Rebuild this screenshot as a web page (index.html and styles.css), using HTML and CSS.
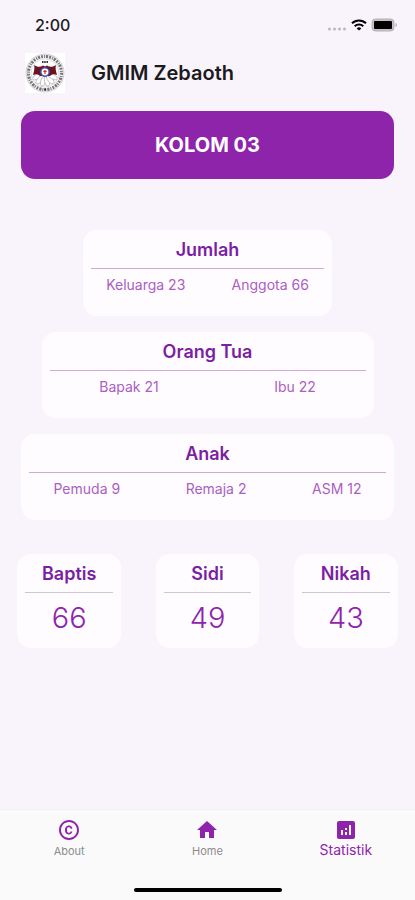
FILE: index.html
```html
<!DOCTYPE html>
<html lang="id">
<head>
  <meta charset="UTF-8">
  <meta name="viewport" content="width=device-width, initial-scale=1.0">
  <title>GMIM Zebaoth</title>
  <link rel="stylesheet" href="styles.css">
</head>
<body>
  <div class="status-bar">
    <span class="time">2:00</span>
    <div class="status-icons">
      <svg width="20" height="4" viewBox="0 0 20 4" fill="#bbb6bd">
        <circle cx="2.500" cy="2" r="1.500"/><circle cx="7.500" cy="2" r="1.500"/>
        <circle cx="12.500" cy="2" r="1.500"/><circle cx="17.500" cy="2" r="1.500"/>
      </svg>
      <svg width="16" height="12" viewBox="0 0 16 12" fill="none" stroke="#000" stroke-width="2">
        <path d="M1 4.300a10 10 0 0 1 14 0"/>
        <path d="M3.700 7.200a6.200 6.200 0 0 1 8.600 0"/>
        <path d="M8 11.600 5.700 9.400a3.300 3.300 0 0 1 4.600 0z" fill="#000" stroke="none"/>
      </svg>
      <svg width="27" height="14" viewBox="0 0 27 14">
        <rect x="1" y="1" width="22" height="12" rx="3.500" fill="#c6c1c8" stroke="#b5b0b8"/>
        <rect x="3" y="3" width="18" height="8" rx="1" fill="#000"/>
        <path d="M24.500 5v4c2-.8 2-3.200 0-4z" fill="#b5b0b8"/>
      </svg>
    </div>
  </div>

  <header class="header">
    <svg class="logo" viewBox="0 0 40 40" role="img" aria-label="Logo GMIM">
      <rect width="40" height="40" fill="#fff"/>
      <circle cx="20" cy="20" r="19" fill="#f4f3f4" stroke="#b5b2b6" stroke-width=".6"/>
      <circle cx="20" cy="20" r="16.600" fill="none" stroke="#77747a" stroke-width="3" stroke-dasharray="1.800 1.200 1 .9 2.200 1.100"/>
      <circle cx="20" cy="20" r="14" fill="#fff" stroke="#c5c2c6" stroke-width=".5"/>
      <g fill="#fff" stroke="#b0adb2" stroke-width=".7">
        <ellipse cx="20" cy="28.500" rx="2.400" ry="5" transform="rotate(65 20 20)"/>
        <ellipse cx="20" cy="28.500" rx="2.400" ry="5" transform="rotate(38 20 20)"/>
        <ellipse cx="20" cy="28.500" rx="2.400" ry="5" transform="rotate(13 20 20)"/>
        <ellipse cx="20" cy="28.500" rx="2.400" ry="5" transform="rotate(-13 20 20)"/>
        <ellipse cx="20" cy="28.500" rx="2.400" ry="5" transform="rotate(-38 20 20)"/>
        <ellipse cx="20" cy="28.500" rx="2.400" ry="5" transform="rotate(-65 20 20)"/>
      </g>
      <path d="M17 8h1.500v2H17zM19.200 8h1.500v2h-1.500zM21.500 8H23v2h-1.500z" fill="#333"/>
      <path d="M9 12c3 2 6 2.500 9 .5l2 1 2-1c3 2 6 1.500 9-.5-1 3 0 6 1 10-3-1.500-5-1-7 1H15c-2-2-4-2.500-7-1 1-4 2-7 1-10z" fill="#6b1420"/>
      <circle cx="20" cy="19" r="4.200" fill="#fff" stroke="#3d52a8" stroke-width="1.500"/>
      <path d="M20 17v4M18.300 18.300h3.400" stroke="#cf2f3b" stroke-width="1.200"/>
      <circle cx="20" cy="36.500" r="1" fill="#222"/>
    </svg>
    <h1 class="title">GMIM Zebaoth</h1>
  </header>

  <main class="content">
    <div class="banner">KOLOM 03</div>

    <section class="card card-small">
      <h2>Jumlah</h2>
      <div class="row">
        <span>Keluarga 23</span>
        <span>Anggota 66</span>
      </div>
    </section>

    <section class="card card-medium">
      <h2>Orang Tua</h2>
      <div class="row">
        <span>Bapak 21</span>
        <span>Ibu 22</span>
      </div>
    </section>

    <section class="card card-large">
      <h2>Anak</h2>
      <div class="row">
        <span>Pemuda 9</span>
        <span>Remaja 2</span>
        <span>ASM 12</span>
      </div>
    </section>

    <div class="totals">
      <section class="total">
        <h2>Baptis</h2>
        <p>66</p>
      </section>
      <section class="total">
        <h2>Sidi</h2>
        <p>49</p>
      </section>
      <section class="total">
        <h2>Nikah</h2>
        <p>43</p>
      </section>
    </div>
  </main>

  <nav class="bottom-nav">
    <a href="#about" class="nav-item">
      <svg viewBox="0 0 24 24"><path d="M10.080 10.860c.05-.33.160-.62.300-.87s.34-.46.590-.62c.24-.15.540-.22.910-.23.230.01.440.05.630.13.200.09.380.21.520.36s.25.330.34.530.13.420.14.640h1.790c-.02-.47-.11-.9-.28-1.290s-.4-.73-.7-1.010-.66-.5-1.080-.66-.88-.23-1.390-.23c-.65 0-1.220.110-1.700.34s-.88.530-1.200.920-.56.840-.71 1.360S8 11.290 8 11.870v.27c0 .58.080 1.120.230 1.640s.39.970.71 1.350.72.690 1.200.91c.48.220 1.050.34 1.700.34.470 0 .91-.08 1.320-.23s.77-.36 1.080-.63.560-.58.740-.94.290-.74.300-1.150h-1.790c-.01.210-.06.400-.15.580s-.21.330-.36.460-.32.230-.52.300c-.19.070-.39.090-.6.100-.36-.01-.66-.08-.89-.23-.25-.16-.45-.37-.59-.62s-.25-.55-.3-.88-.08-.67-.08-1v-.27c0-.35.030-.68.080-1.010zM12 2C6.480 2 2 6.480 2 12s4.480 10 10 10 10-4.480 10-10S17.520 2 12 2zm0 18c-4.410 0-8-3.590-8-8s3.590-8 8-8 8 3.590 8 8-3.590 8-8 8z"/></svg>
      <span>About</span>
    </a>
    <a href="#home" class="nav-item">
      <svg viewBox="0 0 24 24"><path d="M10 20v-6h4v6h5v-8h3L12 3 2 12h3v8z"/></svg>
      <span>Home</span>
    </a>
    <a href="#statistik" class="nav-item active">
      <svg viewBox="0 0 24 24"><path fill-rule="evenodd" d="M19 3H5c-1.100 0-2 .9-2 2v14c0 1.100.9 2 2 2h14c1.100 0 2-.9 2-2V5c0-1.100-.9-2-2-2zM9 17H7v-5h2v5zm4 0h-2v-3h2v3zm0-5h-2v-2h2v2zm4 5h-2V7h2v10z"/></svg>
      <span>Statistik</span>
    </a>
  </nav>
  <div class="home-indicator"></div>
</body>
</html>
```

FILE: styles.css
```css
* {
  box-sizing: border-box;
}
body {
  display: flex;
  flex-direction: column;
  min-height: 100vh;
  margin: 0;
  font-family: Inter, "Liberation Sans", sans-serif;
  background-color: #f9f4fb;
  color: #8e24aa;
}
h1, h2, p {
  margin: 0;
}
.status-bar {
  display: flex;
  align-items: center;
  justify-content: space-between;
  height: 50px;
  padding: 0 17px 0 35px;
}
.time {
  font-size: 16px;
  font-weight: 500;
  color: #1c1a1e;
}
.status-icons {
  display: flex;
  align-items: center;
  gap: 4px;
}
.status-icons svg:first-child {
  margin-top: 8px;
}
.header {
  display: flex;
  align-items: center;
  gap: 26px;
  height: 46px;
  padding: 0 25px;
}
.logo {
  width: 40px;
  height: 40px;
}
.title {
  font-size: 20px;
  font-weight: 600;
  color: #1c1a1e;
}
.content {
  flex: 1;
  display: flex;
  flex-direction: column;
  align-items: center;
  gap: 16px;
  padding-top: 15px;
}
.banner {
  width: 90%;
  margin-bottom: 35px;
  padding: 20px;
  border-radius: 14px;
  background-color: #8e24aa;
  color: #fff;
  font-size: 20px;
  line-height: 28px;
  font-weight: 700;
  text-align: center;
}
.card, .total {
  padding: 8px;
  border-radius: 14px;
  background-color: #fefcff;
  text-align: center;
}
.card {
  height: 86px;
}
.card-small {
  width: 60%;
}
.card-medium {
  width: 80%;
}
.card-large {
  width: 90%;
}
.card h2, .total h2 {
  padding-bottom: 6px;
  border-bottom: 1px solid #cfa9da;
  font-size: 18px;
  line-height: 24px;
  font-weight: 600;
  color: #7b1fa2;
}
.row {
  display: flex;
  justify-content: space-around;
  gap: 16px;
  padding-top: 6px;
  font-size: 14px;
  line-height: 20px;
  color: #ab5fc0;
}
.totals {
  display: flex;
  justify-content: space-around;
  width: 100%;
  margin-top: 18px;
}
.total {
  width: 25%;
  height: 94px;
}
.total h2 {
  border-bottom-color: #cfc6d2;
}
.total p {
  padding-top: 8px;
  font-size: 29px;
  line-height: 34px;
  font-weight: 300;
}
.bottom-nav {
  display: flex;
  height: 72px;
  padding-top: 8px;
  border-top: 1px solid #f3f0f4;
  background-color: #fbfafb;
}
.nav-item {
  flex: 1;
  display: flex;
  flex-direction: column;
  align-items: center;
  font-size: 11px;
  line-height: 18px;
  color: #8b8b8b;
  text-decoration: none;
}
.nav-item svg {
  width: 24px;
  height: 24px;
  fill: #8e24aa;
}
.nav-item.active {
  font-size: 14px;
  line-height: 16px;
  color: #8e24aa;
}
.home-indicator {
  display: flex;
  justify-content: center;
  padding: 7px 0 8px;
  background-color: #fbfafb;
}
.home-indicator::before {
  content: "";
  width: 148px;
  height: 4px;
  border-radius: 2px;
  background-color: #000;
}
```
